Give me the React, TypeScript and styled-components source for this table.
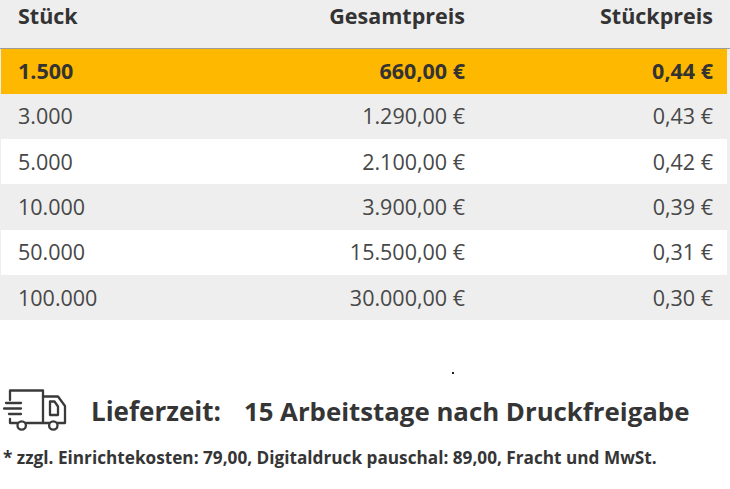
import React from "react";
import styled, { createGlobalStyle } from "styled-components";

const GlobalStyle = createGlobalStyle`
  html, body { margin: 0; padding: 0; background: #ffffff; }
  body { font-family: "Open Sans", "Noto Sans", sans-serif; color: #333333; }
`;

const Page = styled.div`
  width: 730px;
  height: 489px;
  overflow: hidden;
`;

const Table = styled.div`
  background: #eeeeee;
  padding: 0 3px 0 1px;
  height: 320px;
  box-sizing: border-box;
`;

const Grid = styled.div<{ $bg?: string; $bold?: boolean; $h: number }>`
  display: grid;
  grid-template-columns: 240px 238px 248px;
  align-items: center;
  height: ${(p) => p.$h}px;
  background: ${(p) => p.$bg || "transparent"};
  font-size: 21.5px;
  font-weight: ${(p) => (p.$bold ? 700 : 400)};
  color: ${(p) => (p.$bold ? "#333333" : "#474747")};
`;

const HeaderRow = styled(Grid)`
  border-bottom: 1px solid #9c9c9c;
  margin-left: -1px;
  margin-right: -3px;
  padding: 0 3px 0 1px;
  align-items: start;
  padding-top: 1px;
  box-sizing: content-box;
`;

const Cell = styled.div<{ $right?: boolean }>`
  padding: ${(p) => (p.$right ? "0 14px 0 0" : "0 0 0 17px")};
  text-align: ${(p) => (p.$right ? "right" : "left")};
  line-height: 30px;
  white-space: nowrap;
`;

const Stray = styled.div`
  height: 54px;
  position: relative;
`;

const Dot = styled.span`
  position: absolute;
  left: 452px;
  top: 52px;
  width: 2px;
  height: 2px;
  background: #222;
`;

const Delivery = styled.div`
  display: flex;
  align-items: center;
  padding-left: 3px;
  margin-top: 14px;
  height: 46px;
`;

const TruckSvg = styled.svg`
  width: 64px;
  height: 44px;
  flex: none;
  margin-right: 24px;
`;

const DeliveryLabel = styled.span`
  font-size: 26px;
  font-weight: 700;
  color: #353535;
  line-height: 36px;
  margin-right: 23px;
  white-space: nowrap;
`;

const DeliveryValue = styled(DeliveryLabel)`
  margin-right: 0;
  font-size: 25.8px;
`;

const Footnote = styled.div`
  font-size: 17.2px;
  font-weight: 700;
  color: #353535;
  padding-left: 3px;
  margin-top: 12px;
  line-height: 24px;
  white-space: nowrap;
`;

const rows = [
  { q: "3.000", total: "1.290,00 €", unit: "0,43 €" },
  { q: "5.000", total: "2.100,00 €", unit: "0,42 €" },
  { q: "10.000", total: "3.900,00 €", unit: "0,39 €" },
  { q: "50.000", total: "15.500,00 €", unit: "0,31 €" },
  { q: "100.000", total: "30.000,00 €", unit: "0,30 €" },
];

function Truck() {
  return (
    <TruckSvg viewBox="0 0 64 44" fill="none" stroke="#3a3a3a" strokeWidth={2.3} strokeLinecap="round" strokeLinejoin="round">
      <path d="M7 11 V1.5 H40 V34" />
      <path d="M3 14 H18" />
      <path d="M1 19.5 H18" />
      <path d="M6 25 H18" />
      <path d="M7 30 V34 H14.5" />
      <circle cx="18.7" cy="36.5" r="4.2" />
      <path d="M23 34 H46" />
      <circle cx="50.3" cy="36.5" r="4.2" />
      <path d="M54.5 34 H62 V17 L55 7.5 H40" />
      <path d="M47 12.5 H51.5 L55 17.5 V26 H47 Z" />
    </TruckSvg>
  );
}

export default function App() {
  return (
    <Page>
      <GlobalStyle />
      <Table>
        <HeaderRow $h={47} $bold>
          <Cell>Stück</Cell>
          <Cell $right>Gesamtpreis</Cell>
          <Cell $right>Stückpreis</Cell>
        </HeaderRow>
        <Grid $h={44.5} $bg="#ffb800" $bold>
          <Cell>1.500</Cell>
          <Cell $right>660,00 €</Cell>
          <Cell $right>0,44 €</Cell>
        </Grid>
        {rows.map((r, i) => (
          <Grid key={r.q} $h={45.4} $bg={i % 2 === 1 ? "#ffffff" : "transparent"}>
            <Cell>{r.q}</Cell>
            <Cell $right>{r.total}</Cell>
            <Cell $right>{r.unit}</Cell>
          </Grid>
        ))}
      </Table>
      <Stray>
        <Dot />
      </Stray>
      <Delivery>
        <Truck />
        <DeliveryLabel>Lieferzeit:</DeliveryLabel>
        <DeliveryValue>15 Arbeitstage nach Druckfreigabe</DeliveryValue>
      </Delivery>
      <Footnote>* zzgl. Einrichtekosten: 79,00, Digitaldruck pauschal: 89,00, Fracht und MwSt.</Footnote>
    </Page>
  );
}
